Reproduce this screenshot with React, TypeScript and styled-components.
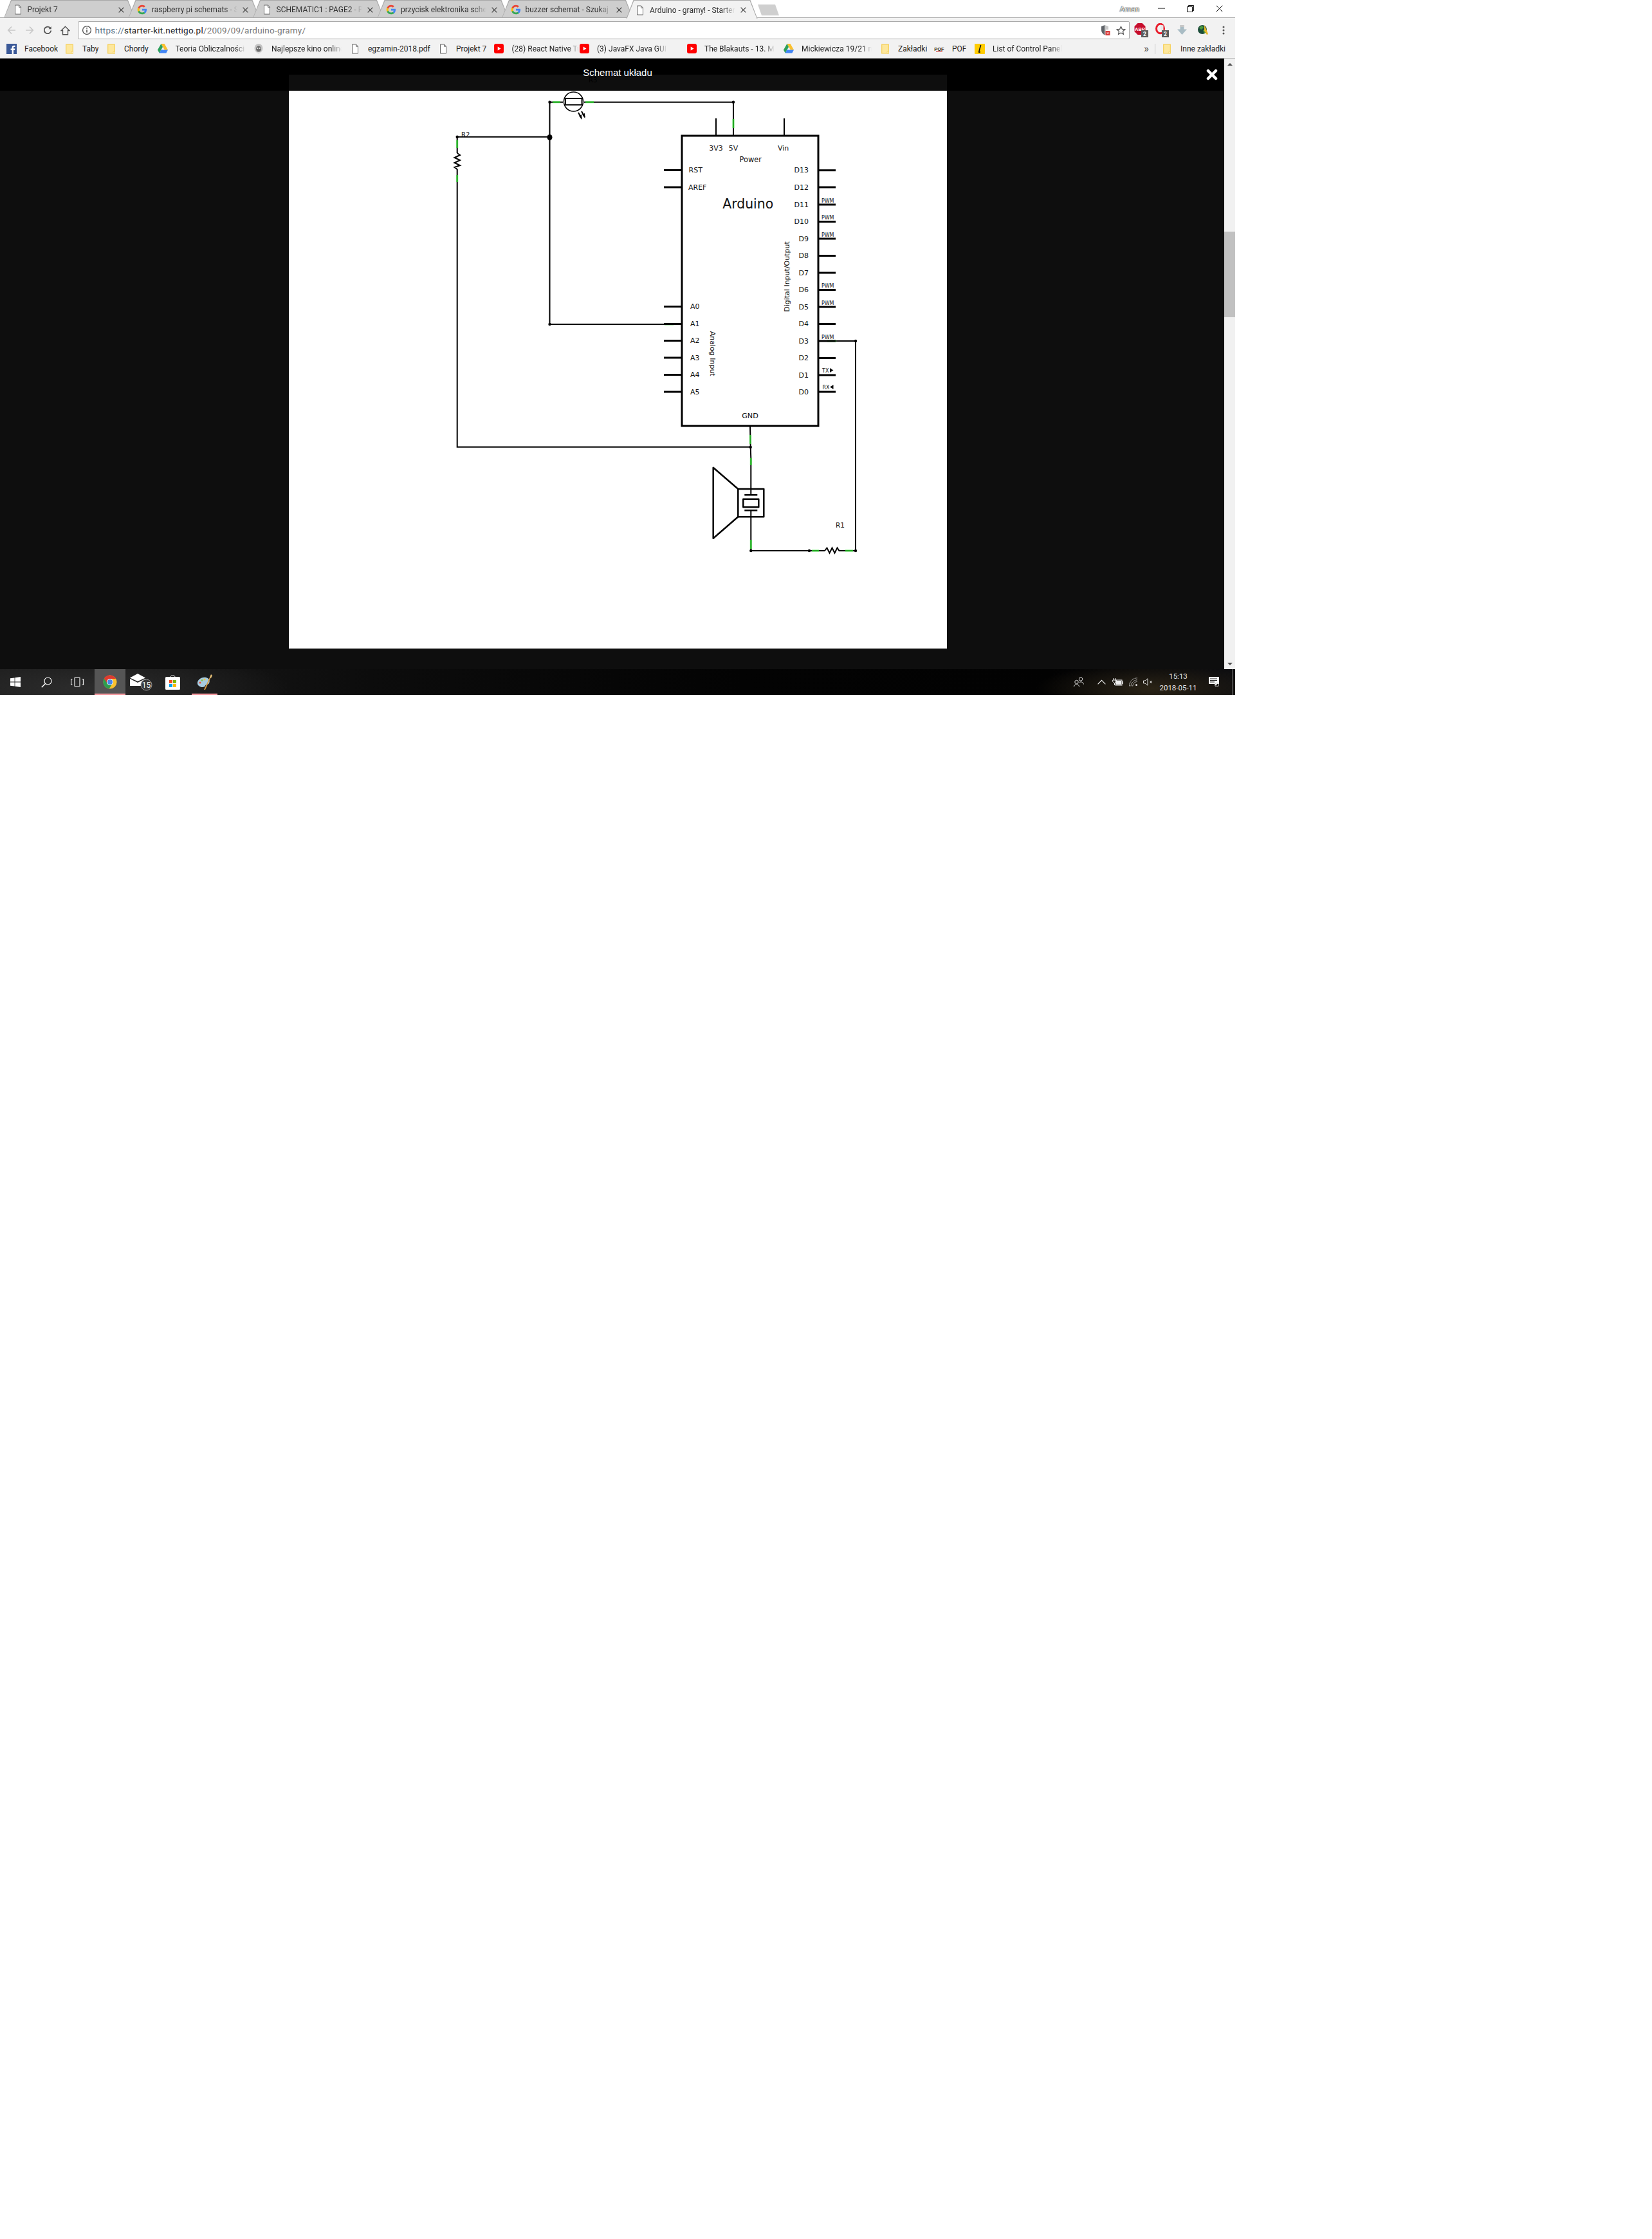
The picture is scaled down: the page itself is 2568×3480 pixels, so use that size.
import React from "react";
import styled, { createGlobalStyle } from "styled-components";

const Global = createGlobalStyle`
  html, body { margin: 0; padding: 0; background: #fff; }
  #root { width: 2568px; height: 3480px; background: #fff; }
`;

const Screen = styled.div`
  width: 1920px;
  height: 1080px;
  display: flex;
  flex-direction: column;
  overflow: hidden;
  font-family: Roboto, "Noto Sans", sans-serif;
  font-size: 12px;
  color: #222;
`;

/* ---------- window / tabs ---------- */
const TabStrip = styled.div`
  height: 28px;
  flex: none;
  display: flex;
  align-items: stretch;
  padding-left: 6px;
  background: #fff;
  box-shadow: inset 0 -1px 0 #a8a8a8;
  position: relative;
`;
const Tab = styled.div<{ $active?: boolean }>`
  position: relative;
  width: 204px;
  height: ${(p) => (p.$active ? 29 : 28)}px;
  margin-right: -10.5px;
  display: flex;
  align-items: center;
  padding: 2px 0 0 13.5px;
  box-sizing: border-box;
  flex: none;
  z-index: ${(p) => (p.$active ? 2 : 1)};
  &::before, &::after {
    content: "";
    position: absolute;
    z-index: -1;
    clip-path: polygon(0 100%, 11px 0, calc(100% - 11px) 0, 100% 100%);
  }
  &::before { inset: 0; background: #a8a8a8; }
  &::after { inset: 1px 1px ${(p) => (p.$active ? 0 : 1)}px 1px; background: ${(p) => (p.$active ? "#f2f2f2" : "#cecece")}; }
`;
const TabIcon = styled.span`
  width: 16px;
  height: 16px;
  flex: none;
  display: flex;
  align-items: center;
  justify-content: center;
`;
const TabTitle = styled.span`
  margin-left: 7px;
  width: 133px;
  flex: none;
  overflow: hidden;
  white-space: nowrap;
  font-size: 12px;
  color: #333;
  -webkit-mask-image: linear-gradient(90deg, #000 85%, transparent 100%);
  mask-image: linear-gradient(90deg, #000 85%, transparent 100%);
`;
const TabClose = styled.span`
  margin-left: 8px;
  display: flex;
`;
const NewTab = styled.div`
  width: 33px;
  height: 17px;
  align-self: flex-start;
  margin: 7px 0 0 11px;
  flex: none;
  background: #cfcfcf;
  clip-path: polygon(0 0, 27px 0, 100% 100%, 6px 100%);
`;
const Profile = styled.span`
  margin-left: auto;
  margin-right: 14px;
  align-self: flex-start;
  margin-top: 7px;
  color: #fff;
  font-size: 11.5px;
  line-height: 14px;
  text-shadow: 0 0 1px #333, 0 0 1px #333, 0 0 2px #555;
`;
const WindowButton = styled.span`
  width: 45px;
  height: 26px;
  display: flex;
  align-items: center;
  justify-content: center;
  flex: none;
  position: relative;
  left: -2px;
`;

/* ---------- toolbar ---------- */
const Toolbar = styled.div`
  height: 33px;
  flex: none;
  display: flex;
  align-items: center;
  background: #f2f2f2;
  padding-left: 4px;
  box-sizing: border-box;
  padding-top: 5px;
  padding-bottom: 0;
`;
const ToolButton = styled.span<{ $w?: number }>`
  width: ${(p) => p.$w ?? 28}px;
  height: 27px;
  display: flex;
  align-items: center;
  justify-content: center;
  flex: none;
`;
const Omnibox = styled.div`
  width: 1635px;
  height: 28px;
  margin-left: 5.5px;
  box-sizing: border-box;
  background: #fff;
  border: 1px solid #a9a9a9;
  border-radius: 2px;
  display: flex;
  align-items: center;
  padding-left: 5px;
  flex: none;
`;
const Url = styled.span`
  margin-left: 5px;
  font-size: 13.5px;
  color: #777;
  letter-spacing: 0.22px;
`;
const UrlScheme = styled.span`color: #5b7386;`;
const UrlHost = styled.span`color: #222;`;
const OmniIcons = styled.div`
  margin-left: auto;
  display: flex;
  align-items: center;
  gap: 8px;
  padding-right: 5px;
`;
const Extensions = styled.div`
  margin-left: 2.3px;
  display: flex;
`;

/* ---------- bookmarks ---------- */
const Bookmarks = styled.div`
  height: 30px;
  flex: none;
  box-sizing: border-box;
  background: #f2f2f2;
  border-bottom: 1px solid #b4b4b4;
  display: flex;
  align-items: center;
  padding-left: 10px;
`;
const Bookmark = styled.div<{ $w: number }>`
  width: ${(p) => p.$w}px;
  flex: none;
  display: flex;
  align-items: center;
  gap: 12px;
`;
const BookmarkIcon = styled.span`
  width: 16px;
  height: 16px;
  flex: none;
  display: flex;
  align-items: center;
  justify-content: center;
`;
const BookmarkLabel = styled.span<{ $fade?: boolean; $ml?: number }>`
  white-space: nowrap;
  overflow: hidden;
  font-size: 12px;
  color: #222;
  margin-left: ${(p) => p.$ml ?? 0}px;
  ${(p) =>
    p.$fade
      ? `max-width: 109px;
         -webkit-mask-image: linear-gradient(90deg, #000 85%, transparent 100%);
         mask-image: linear-gradient(90deg, #000 85%, transparent 100%);`
      : ""}
`;
const BookmarkEnd = styled.div`
  margin-left: auto;
  display: flex;
  align-items: center;
  height: 100%;
  padding-right: 15px;
`;
const Chevrons = styled.span`
  font-size: 17px;
  color: #555;
  margin-right: 9px;
  line-height: 1;
`;
const Separator = styled.span`
  width: 1px;
  height: 16px;
  background: #c4c4c4;
  margin-right: 10px;
`;

/* ---------- page ---------- */
const PageRow = styled.div`
  height: 949px;
  flex: none;
  display: flex;
`;
const Stage = styled.div`
  flex: 1;
  position: relative;
  display: flex;
  flex-direction: column;
  background: #0e0e0e;
`;
const LightboxHeader = styled.div`
  height: 50px;
  flex: none;
  background: #000;
  padding-left: 449px;
  display: flex;
  align-items: flex-end;
`;
const HeaderBand = styled.div`
  width: 1023px;
  height: 25px;
  background: #0e0e0e;
`;
const LightboxTitle = styled.div`
  position: absolute;
  top: 13px;
  left: 0;
  width: 1920px;
  text-align: center;
  font-family: "Liberation Sans", Arial, sans-serif;
  font-size: 15px;
  line-height: 18px;
  color: #fff;
`;
const CloseButton = styled.div`
  position: absolute;
  top: 16px;
  left: 1875px;
  width: 18px;
  height: 18px;
  display: flex;
`;
const Canvas = styled.div`
  flex: 1;
  padding-left: 449px;
`;
const Picture = styled.svg`
  display: block;
  width: 1023px;
  height: 867px;
  background: #fff;
  overflow: visible;
  font-family: "DejaVu Sans", sans-serif;
`;
const Scrollbar = styled.div`
  width: 17px;
  flex: none;
  background: #f1f1f1;
  display: flex;
  flex-direction: column;
  align-items: center;
  position: relative;
`;
const ScrollArrow = styled.span<{ $down?: boolean }>`
  width: 0;
  height: 0;
  border-left: 4px solid transparent;
  border-right: 4px solid transparent;
  ${(p) => (p.$down ? "border-top: 4px solid #505050; margin-bottom: 6px;" : "border-bottom: 4px solid #505050; margin-top: 7px;")}
`;
const ScrollThumb = styled.span`
  width: 17px;
  height: 133px;
  margin-top: 258px;
  margin-bottom: auto;
  background: #c1c1c1;
`;

const Wire = styled.path`
  fill: none;
  stroke: #000;
  stroke-width: 2px;
`;
const Heavy = styled.path`
  fill: none;
  stroke: #000;
  stroke-width: 3px;
  stroke-linejoin: miter;
`;
const Speaker = styled.path`
  fill: none;
  stroke: #000;
  stroke-width: 2.5px;
  stroke-linejoin: round;
`;
const Green = styled.path`
  fill: none;
  stroke: #2fdc2f;
  stroke-width: 3px;
  opacity: 0.75;
`;
const Label = styled.text<{ $size?: number }>`
  font-size: ${(p) => p.$size ?? 11}px;
  fill: #111;
`;
const HiddenLabel = styled.text`
  font-size: 10px;
  fill: #000;
`;

/* ---------- taskbar ---------- */
const Taskbar = styled.div`
  height: 40px;
  flex: none;
  display: flex;
  color: #fff;
  background:
    radial-gradient(ellipse 180px 40px at 1790px 30px, #2a2316 0%, transparent 100%),
    radial-gradient(ellipse 320px 60px at 130px 30px, #2c2c2c 0%, transparent 100%),
    linear-gradient(90deg, #1a1a1a 0%, #161616 14%, #0c0c0c 30%, #030303 60%, #020202 85%, #0d0d10 100%);
`;
const TaskSlot = styled.div<{ $w: number; $ml?: number; $active?: boolean; $running?: boolean }>`
  width: ${(p) => p.$w}px;
  margin-left: ${(p) => p.$ml ?? 0}px;
  flex: none;
  box-sizing: border-box;
  display: flex;
  align-items: center;
  justify-content: center;
  background: ${(p) => (p.$active ? "#555" : "transparent")};
  border-bottom: 2px solid ${(p) => (p.$running ? "#f79aa0" : "transparent")};
  border-top: 2px solid transparent;
`;
const Tray = styled.div`
  margin-left: auto;
  display: flex;
  width: 260px;
`;
const Clock = styled.div`
  width: 73px;
  flex: none;
  display: flex;
  flex-direction: column;
  align-items: center;
  font-size: 11.5px;
  line-height: 18px;
  padding-top: 2px;
  color: #e8e8e8;
`;
const ShowDesktop = styled.span`
  width: 1px;
  margin-left: 10px;
  background: #666;
`;

/* ---------- icons ---------- */
const Doc = () => (
  <svg width="12" height="16" viewBox="0 0 12 16" fill="#fff" stroke="#666" strokeWidth="1">
    <path d="M1.5 1h6l3 3.2V15h-9z" />
    <path d="M7.5 1v3.2h3" fill="none" />
  </svg>
);
const G = () => (
  <svg width="16" height="16" viewBox="0 0 24 24">
    <path fill="#4285F4" d="M22.56 12.25c0-.78-.07-1.53-.2-2.25H12v4.26h5.92c-.26 1.37-1.04 2.53-2.21 3.31v2.77h3.57c2.08-1.92 3.28-4.74 3.28-8.09z" />
    <path fill="#34A853" d="M12 23c2.97 0 5.46-.98 7.28-2.66l-3.57-2.77c-.98.66-2.23 1.06-3.71 1.06-2.86 0-5.29-1.93-6.16-4.53H2.18v2.84C3.99 20.53 7.7 23 12 23z" />
    <path fill="#FBBC05" d="M5.84 14.09c-.22-.66-.35-1.36-.35-2.09s.13-1.43.35-2.09V7.07H2.18C1.43 8.55 1 10.22 1 12s.43 3.45 1.18 4.93l2.85-2.22.81-.62z" />
    <path fill="#EA4335" d="M12 5.38c1.62 0 3.06.56 4.21 1.64l3.15-3.15C17.45 2.09 14.97 1 12 1 7.7 1 3.99 3.47 2.18 7.07l3.66 2.84c.87-2.6 3.3-4.53 6.16-4.53z" />
  </svg>
);
const CloseX = ({ c = "#444", s = 9, w = 1.4 }: { c?: string; s?: number; w?: number }) => (
  <svg width={s} height={s} viewBox="0 0 10 10" stroke={c} strokeWidth={w} fill="none">
    <path d="M.7.7l8.6 8.6M9.3.7L.7 9.3" />
  </svg>
);
const Folder = () => (
  <svg width="12" height="16" viewBox="0 0 12 16">
    <path d="M.7 1.2h10.6v13.6H.7z" fill="#fde79c" stroke="#f6cf57" strokeWidth="1.2" />
    <path d="M9 12h2.4v2.8H9z" fill="#fff6d2" stroke="#f6cf57" strokeWidth=".8" />
  </svg>
);
const Drive = () => (
  <svg width="16" height="15" viewBox="0 0 16 15">
    <path d="M5.4 0h5.2l5.4 9.6h-5.2z" fill="#fbc02d" />
    <path d="M5.4 0L0 9.6l2.6 4.8L8 5z" fill="#2ca05a" />
    <path d="M2.6 14.4h10.8L16 9.6H5.3z" fill="#4285f4" />
  </svg>
);
const Youtube = () => (
  <svg width="15" height="15" viewBox="0 0 15 15">
    <rect width="15" height="15" rx="3" fill="#f00" />
    <path d="M5.7 4.5l4.8 3-4.8 3z" fill="#fff" />
  </svg>
);
const Facebook = () => (
  <svg width="16" height="16" viewBox="0 0 16 16">
    <rect width="16" height="16" fill="#3b5998" />
    <path d="M11 16v-6h2l.3-2.4H11V6c0-.7.2-1.1 1.2-1.1h1.2V2.8c-.3 0-1-.1-1.8-.1-1.8 0-3 1.1-3 3.1v1.8H6.6V10h2V16z" fill="#fff" />
  </svg>
);
const Ghost = () => (
  <svg width="16" height="18" viewBox="0 0 16 18">
    <ellipse cx="8" cy="8" rx="6.5" ry="7" fill="#c4c4c4" />
    <ellipse cx="8" cy="9" rx="4" ry="4.5" fill="#6c6c6c" />
    <circle cx="6.3" cy="8" r="1.1" fill="#eee" />
    <circle cx="9.7" cy="8" r="1.1" fill="#eee" />
    <path d="M4 14l4 3 4-3" fill="#ddd" />
  </svg>
);
const Pof = () => (
  <svg width="16" height="12" viewBox="0 0 16 12">
    <text x="8" y="9" textAnchor="middle" fontSize="7.5" fontWeight="900" fontFamily="Liberation Sans, sans-serif" fill="#222">POF</text>
    <path d="M3 10.5h10" stroke="#c33" strokeWidth="1" />
  </svg>
);
const LIcon = () => (
  <svg width="16" height="16" viewBox="0 0 16 16">
    <rect width="16" height="16" rx="1" fill="#fc0" />
    <path d="M9.5 2.5C8.5 6 7.5 9.5 6.8 12.5c-.2.9.6 1 1.6.4" fill="none" stroke="#111" strokeWidth="1.6" strokeLinecap="round" />
  </svg>
);
const Back = ({ c }: { c: string }) => (
  <svg width="14" height="14" viewBox="0 0 14 14" fill="none" stroke={c} strokeWidth="1.7">
    <path d="M13 7H2M7 1.5L1.7 7 7 12.5" />
  </svg>
);
const Forward = ({ c }: { c: string }) => (
  <svg width="14" height="14" viewBox="0 0 14 14" fill="none" stroke={c} strokeWidth="1.7">
    <path d="M1 7h11M7 1.5L12.3 7 7 12.5" />
  </svg>
);
const Reload = () => (
  <svg width="14" height="14" viewBox="0 0 14 14" fill="none" stroke="#555" strokeWidth="1.8">
    <path d="M11.5 4A5.3 5.3 0 1 0 12.3 7.5" />
    <path d="M12.7 1v4.2H8.5z" fill="#555" stroke="none" />
  </svg>
);
const Home = () => (
  <svg width="15" height="15" viewBox="0 0 15 15" fill="none" stroke="#555" strokeWidth="1.4">
    <path d="M7.5 1.2L1.2 7.5h2.3v6.3h8V7.5h2.3z" />
  </svg>
);
const Info = () => (
  <svg width="16" height="16" viewBox="0 0 16 16" fill="none" stroke="#555" strokeWidth="1.3">
    <circle cx="8" cy="8" r="6.4" />
    <path d="M8 7v4.5" strokeWidth="1.6" />
    <circle cx="8" cy="4.8" r="1" fill="#555" stroke="none" />
  </svg>
);
const Shield = () => (
  <svg width="16" height="18" viewBox="0 0 16 18">
    <path d="M6.5 1L1 3v5.5C1 12.5 3.5 15 6.5 16.5z" fill="#5f6368" />
    <path d="M6.5 1L12 3v5H8v8L6.5 16.5z" fill="#c9c9c9" />
    <rect x="7.5" y="10" width="7" height="7" fill="#d93a3a" />
    <path d="M9.8 12.3l2.4 2.4M12.2 12.3l-2.4 2.4" stroke="#fff" strokeWidth="1" />
  </svg>
);
const Star = () => (
  <svg width="15" height="15" viewBox="0 0 15 15" fill="none" stroke="#555" strokeWidth="1.3">
    <path d="M7.5 1.3l1.9 4 4.3.5-3.2 3 .9 4.4-3.9-2.2-3.9 2.2.9-4.4-3.2-3 4.3-.5z" />
  </svg>
);
const Badge = ({ n }: { n: string }) => (
  <g>
    <rect x="11" y="11" width="11" height="11" fill="#5c5c5c" />
    <text x="16.5" y="20" textAnchor="middle" fontSize="8.5" fontWeight="700" fontFamily="Roboto, sans-serif" fill="#fff">{n}</text>
  </g>
);
const Abp = () => (
  <svg width="22" height="22" viewBox="0 0 22 22">
    <path d="M5.5 0h7l5 5v8l-5 5h-7l-5-5V5z" fill="#c70d2c" />
    <text x="9" y="12" textAnchor="middle" fontSize="7.5" fontWeight="700" fontFamily="Liberation Sans, sans-serif" fill="#fff">ABP</text>
    <Badge n="2" />
  </svg>
);
const Opera = () => (
  <svg width="22" height="22" viewBox="0 0 22 22">
    <ellipse cx="8.5" cy="8.5" rx="6" ry="7.3" fill="none" stroke="#e81c2b" strokeWidth="3" />
    <path d="M8.5 2.5l5 1v11.500l-3-1z" fill="#e8e8e8" />
    <Badge n="2" />
  </svg>
);
const Download = () => (
  <svg width="17" height="18" viewBox="0 0 17 18">
    <path d="M5.5 1h6v6.5H16L8.5 16 1 7.5h4.5z" fill="#a9bcc4" />
    <path d="M5.5 1h6v3h-6z" fill="#c6c6c6" />
  </svg>
);
const Globe = () => (
  <svg width="18" height="18" viewBox="0 0 18 18">
    <circle cx="8" cy="8" r="7" fill="#1c4d3a" />
    <path d="M3 5l4-3 3 2-2 3-2 1zM9 9l4-1 1 3-3 3z" fill="#4a9a3c" />
    <path d="M11 1l3 6 3 8-2 1-4-6z" fill="#e8b92a" />
  </svg>
);
const Dots = () => (
  <svg width="4" height="14" viewBox="0 0 4 14" fill="#555">
    <circle cx="2" cy="2" r="1.5" />
    <circle cx="2" cy="7" r="1.5" />
    <circle cx="2" cy="12" r="1.5" />
  </svg>
);
const WinLogo = () => (
  <svg width="16" height="16" viewBox="0 0 16 16" fill="#fff">
    <path d="M0 2.3l6.6-.9v6.2H0zM7.4 1.3L16 0v7.6H7.4zM0 8.4h6.6v6.2L0 13.7zM7.4 8.4H16V16l-8.6-1.3z" />
  </svg>
);
const Search = () => (
  <svg width="17" height="17" viewBox="0 0 17 17" fill="none" stroke="#fff" strokeWidth="1.2">
    <circle cx="10.5" cy="6.5" r="5.5" />
    <path d="M6.5 10.5L.8 16.3" strokeWidth="1.5" />
  </svg>
);
const TaskView = () => (
  <svg width="20" height="14" viewBox="0 0 20 14" fill="none" stroke="#fff" strokeWidth="1.1">
    <path d="M6 .5h8v13H6zM2.5 2.5H.6v9h1.900M17.500 2.500h1.900v9h-1.900" />
  </svg>
);
const ChromeLogo = () => (
  <svg width="22" height="22" viewBox="0 0 24 24">
    <circle cx="12" cy="12" r="11.5" fill="#fbc02d" />
    <path d="M2 6A11.5 11.5 0 0 0 10.5 23.4L16 15H9z" fill="#2e9e4f" />
    <path d="M12 .5A11.5 11.5 0 0 1 22 6.5H12L7 14 2 6A11.5 11.5 0 0 1 12 .5z" fill="#dd3b30" />
    <circle cx="12" cy="12" r="5.5" fill="#fff" />
    <circle cx="12" cy="12" r="4.4" fill="#4a86e8" />
  </svg>
);
const Mail = () => (
  <svg width="36" height="28" viewBox="0 0 36 28">
    <path d="M0 7.5L12 1l12 6.5L12 13z" fill="#fff" />
    <path d="M0 9l12 6 12-6v11H0z" fill="#fff" />
    <circle cx="25.5" cy="18.5" r="8.5" fill="#3a3a3a" stroke="#999" strokeWidth="1" />
    <text x="25.5" y="23" textAnchor="middle" fontSize="12" fontFamily="Roboto, sans-serif" fill="#fff">15</text>
  </svg>
);
const Store = () => (
  <svg width="23" height="24" viewBox="0 0 23 24">
    <path d="M7.5 6c0-6 8-6 8 0" fill="none" stroke="#ddd" strokeWidth="1" />
    <rect y="4" width="23" height="20" rx="1.5" fill="#fff" />
    <rect x="6" y="9" width="5" height="5" fill="#f25022" />
    <rect x="12" y="9" width="5" height="5" fill="#7fba00" />
    <rect x="6" y="15" width="5" height="5" fill="#00a4ef" />
    <rect x="12" y="15" width="5" height="5" fill="#ffb900" />
  </svg>
);
const Paint = () => (
  <svg width="24" height="24" viewBox="0 0 24 24">
    <path d="M1 15C0 9 7 4 14 5c5 1 7 5 5 9-2 3-5 1-6 4-1 3-10 3-12-3z" fill="#a6cbe0" />
    <circle cx="5" cy="13" r="1.5" fill="#e74c3c" />
    <circle cx="8" cy="9.5" r="1.5" fill="#8bc34a" />
    <circle cx="12" cy="8" r="1.5" fill="#f5c542" />
    <path d="M11 24L20 5l1.5.6L13 24z" fill="#d99a3d" />
    <path d="M20 5l2-5 2 2-2 4z" fill="#e8c27a" />
  </svg>
);
const People = () => (
  <svg width="16" height="16" viewBox="0 0 16 16" fill="none" stroke="#ddd" strokeWidth="1">
    <circle cx="11" cy="3.5" r="2.7" />
    <circle cx="4.5" cy="8" r="2.7" />
    <path d="M.5 15.5c0-5 8-5 8 0M9 8.5c3-1.5 6 0 6.5 3" />
  </svg>
);
const Chevron = () => (
  <svg width="13" height="8" viewBox="0 0 13 8" fill="none" stroke="#eee" strokeWidth="1.2">
    <path d="M.6 7.3l5.900-6 5.900 6" />
  </svg>
);
const Battery = () => (
  <svg width="17" height="12" viewBox="0 0 17 12">
    <path d="M2 0v3M5 0v3M.7 3h5.600v2.500L3.500 8 .7 5.500zM3.500 8v3" fill="none" stroke="#eee" strokeWidth="1" />
    <rect x="5" y="3" width="10" height="8" fill="none" stroke="#eee" strokeWidth="1" />
    <rect x="6" y="4" width="8" height="6" fill="#eee" />
    <rect x="15.5" y="5" width="1.5" height="4" fill="#eee" />
  </svg>
);
const Wifi = () => (
  <svg width="14" height="14" viewBox="0 0 14 14" fill="none" stroke="#bbb" strokeWidth="1">
    <path d="M.5 13.5C.5 6 6 .8 13 .8M3 13.5c0-5 4.5-9.800 10-9.800M5.700 13.500c0-3.500 3.500-7 7.300-7" strokeDasharray="2 .6" />
    <circle cx="11.5" cy="11.7" r="1.4" fill="#eee" stroke="none" />
  </svg>
);
const Volume = () => (
  <svg width="15" height="12" viewBox="0 0 15 12" fill="none" stroke="#ddd" strokeWidth="1">
    <path d="M.5 4H3L7 .8v10.400L3 8H.5zM10 4l4 4M14 4l-4 4" />
  </svg>
);
const Notify = () => (
  <svg width="18" height="16" viewBox="0 0 18 16">
    <path d="M1 0h16v11h-3l-2 3-2-3H1z" fill="#fff" />
    <path d="M3 3h11M3 5.5h11M3 8h7" stroke="#222" strokeWidth="1" />
    <circle cx="13.5" cy="12.5" r="3" fill="none" stroke="#bbb" strokeWidth="1" />
  </svg>
);

/* ---------- schematic ---------- */
const leftPins: [string, number, number][] = [
  ["RST", 264.5, 1070.5],
  ["AREF", 291, 1070],
  ["A0", 476.5, 1073],
  ["A1", 503.5, 1073],
  ["A2", 529.5, 1073],
  ["A3", 556, 1073],
  ["A4", 582.5, 1073],
  ["A5", 609, 1073],
];
const rightPins: [string, number, string?][] = [
  ["D13", 264.7],
  ["D12", 291],
  ["D11", 318, "PWM"],
  ["D10", 344.5, "PWM"],
  ["D9", 371, "PWM"],
  ["D8", 397.5],
  ["D7", 424],
  ["D6", 450.5, "PWM"],
  ["D5", 477, "PWM"],
  ["D4", 503.5],
  ["D3", 530, "PWM"],
  ["D2", 556.5],
  ["D1", 583],
  ["D0", 609],
];
const ends: [number, number][] = [
  [854.5, 158.7],
  [1140, 158.7],
  [710.7, 212.7],
  [854.5, 504],
  [1330, 530],
  [1166.7, 695],
  [1167.3, 856],
  [1258, 856],
  [1330, 856],
];

const Schematic = () => (
  <Picture viewBox="449 141 1023 867">
    <HiddenLabel x="915" y="128">R3</HiddenLabel>

    <Wire d="M854.5 158.7H875M908 158.7H1140V211M854.5 158.7V504H1060" />
    <Wire d="M710.7 212.7H854.5M710.7 212.7V238M710.700 263V694.700H1166.700" />
    <Wire d="M710.7 238l4.3 3-8.500 4 8.500 4-8.500 4 8.500 4-8.500 3 4.200 3" />
    <Wire d="M1113 184V211M1219 184V211" />
    <Wire d="M1166 662L1166.7 695L1167.3 712V769.3M1167.3 793.3V856H1282" />
    <Wire d="M1282 856l3.500-4.500 4 8 4-8 4 8 4-8 3 4.500H1330V530H1272" />
    <Green d="M859 158.7h12M910 158.7h13M1140 185v14M710.7 218v12M710.7 272v11M1033 504h14M1286 530h14M1166.5 676v14M1167.3 712v11M1167.3 839v14M1262 856h11M1314 856h12" />
    {ends.map(([x, y]) => (
      <circle key={`${x}-${y}`} cx={x} cy={y} r="2.2" fill="#000" />
    ))}
    <ellipse cx="854.5" cy="213.5" rx="4" ry="4.5" fill="#000" />

    <ellipse cx="891.5" cy="158" rx="15" ry="15" fill="#fff" stroke="#000" strokeWidth="1.5" />
    <rect x="879" y="153" width="25.5" height="10" fill="#fff" stroke="#000" strokeWidth="1.8" />
    <Wire d="M899 175l5 9M904 173l5 9" />
    <path d="M904.5 186l-.5-8-4 2zM909.5 184l-.5-8-4 2z" fill="#000" />

    <Heavy d="M1060 211H1272V662H1060z" />
    {leftPins.map(([t, y, x]) => (
      <g key={t}>
        <Heavy d={`M1032 ${y}H1060`} />
        <Label x={x} y={y + 3.5}>{t}</Label>
      </g>
    ))}
    {rightPins.map(([t, y, tag]) => (
      <g key={t}>
        <Heavy d={`M1272 ${y}H1299`} />
        <Label x="1257" y={y + 3.5} textAnchor="end">{t}</Label>
        {tag && <Label x="1286.7" y={y - 3.5} textAnchor="middle" $size={8}>{tag}</Label>}
      </g>
    ))}
    <Label x="1278" y="578.5" $size={8}>TX</Label>
    <path d="M1290 572l5.500 3.500-5.500 3.500z" fill="#111" />
    <Label x="1278.5" y="604.5" $size={8}>RX</Label>
    <path d="M1295.5 598l-5.500 3.500 5.500 3.500z" fill="#111" />

    <Label x="1113" y="233.8" textAnchor="middle">3V3</Label>
    <Label x="1140" y="233.8" textAnchor="middle">5V</Label>
    <Label x="1217.7" y="233.8" textAnchor="middle">Vin</Label>
    <Label x="1166.7" y="251.8" textAnchor="middle" $size={11.4}>Power</Label>
    <Label x="1162.7" y="323.5" textAnchor="middle" $size={20.4}>Arduino</Label>
    <Label x="1166" y="650" textAnchor="middle" $size={11.2}>GND</Label>
    <Label transform="translate(1226.5 430) rotate(-90)" textAnchor="middle">Digital Input/Output</Label>
    <Label transform="translate(1103.5 549.7) rotate(90)" textAnchor="middle">Analog Input</Label>

    <Speaker d="M1147.3 760L1108.7 726.7V836.7L1147.3 803.3" />
    <Speaker d="M1147.3 760H1187.3V803.3H1147.3z" />
    <Speaker d="M1157.3 769.3H1177.3M1157.3 793.3H1177.3" />
    <Speaker d="M1155.3 775.7H1179.3V788.3H1155.3z" />
    <Label x="1306" y="820" textAnchor="middle" $size={10.5}>R1</Label>
    <Label x="723.7" y="213" textAnchor="middle" $size={10}>R2</Label>
  </Picture>
);

/* ---------- data ---------- */
const tabs = [
  { icon: <Doc />, title: "Projekt 7" },
  { icon: <G />, title: "raspberry pi schemats - S" },
  { icon: <Doc />, title: "SCHEMATIC1 : PAGE2 - PCB" },
  { icon: <G />, title: "przycisk elektronika schem" },
  { icon: <G />, title: "buzzer schemat - Szukaj w" },
  { icon: <Doc />, title: "Arduino - gramy! - Starter", active: true },
];
const bookmarks = [
  { w: 90, icon: <Facebook />, label: "Facebook" },
  { w: 65, icon: <Folder />, label: "Taby" },
  { w: 79.5, icon: <Folder />, label: "Chordy" },
  { w: 149.5, icon: <Drive />, label: "Teoria Obliczalności - ", fade: true },
  { w: 150, icon: <Ghost />, label: "Najlepsze kino online", fade: true },
  { w: 137, icon: <Doc />, label: "egzamin-2018.pdf" },
  { w: 86.5, icon: <Doc />, label: "Projekt 7" },
  { w: 132.5, icon: <Youtube />, label: "(28) React Native Tutorial", fade: true },
  { w: 167, icon: <Youtube />, label: "(3) JavaFX Java GUI Tutorial", fade: true },
  { w: 151, icon: <Youtube />, label: "The Blakauts - 13. Mój", fade: true },
  { w: 150, icon: <Drive />, label: "Mickiewicza 19/21 mieszkanie", fade: true },
  { w: 84, icon: <Folder />, label: "Zakładki" },
  { w: 63, icon: <Pof />, label: "POF" },
  { w: 140, icon: <LIcon />, label: "List of Control Panel", fade: true },
];

export default function App() {
  return (
    <>
      <Global />
      <Screen>
        <TabStrip>
          {tabs.map((t) => (
            <Tab key={t.title} $active={t.active}>
              <TabIcon>{t.icon}</TabIcon>
              <TabTitle>{t.title}</TabTitle>
              <TabClose><CloseX /></TabClose>
            </Tab>
          ))}
          <NewTab />
          <Profile>Aman</Profile>
          <WindowButton>
            <svg width="11" height="2" viewBox="0 0 11 2"><path d="M0 1h11" stroke="#111" strokeWidth="1" /></svg>
          </WindowButton>
          <WindowButton>
            <svg width="11" height="11" viewBox="0 0 11 11" fill="none" stroke="#111"><path d="M.5 2.5h8v8h-8zM2.5 2.5v-2h8v8h-2" /></svg>
          </WindowButton>
          <WindowButton>
            <CloseX c="#111" s={11} w={0.9} />
          </WindowButton>
        </TabStrip>

        <Toolbar>
          <ToolButton><Back c="#c8c8c8" /></ToolButton>
          <ToolButton><Forward c="#c8c8c8" /></ToolButton>
          <ToolButton><Reload /></ToolButton>
          <ToolButton $w={27}><Home /></ToolButton>
          <Omnibox>
            <Info />
            <Url>
              <UrlScheme>https://</UrlScheme>
              <UrlHost>starter-kit.nettigo.pl</UrlHost>
              /2009/09/arduino-gramy/
            </Url>
            <OmniIcons>
              <Shield />
              <Star />
            </OmniIcons>
          </Omnibox>
          <Extensions>
            <ToolButton $w={32}><Abp /></ToolButton>
            <ToolButton $w={32}><Opera /></ToolButton>
            <ToolButton $w={32}><Download /></ToolButton>
            <ToolButton $w={32}><Globe /></ToolButton>
            <ToolButton $w={32}><Dots /></ToolButton>
          </Extensions>
        </Toolbar>

        <Bookmarks>
          {bookmarks.map((b) => (
            <Bookmark key={b.label} $w={b.w}>
              <BookmarkIcon>{b.icon}</BookmarkIcon>
              <BookmarkLabel $fade={b.fade}>{b.label}</BookmarkLabel>
            </Bookmark>
          ))}
          <BookmarkEnd>
            <Chevrons>»</Chevrons>
            <Separator />
            <BookmarkIcon><Folder /></BookmarkIcon>
            <BookmarkLabel $ml={13}>Inne zakładki</BookmarkLabel>
          </BookmarkEnd>
        </Bookmarks>

        <PageRow>
          <Stage>
            <LightboxHeader>
              <HeaderBand />
            </LightboxHeader>
            <Canvas>
              <Schematic />
            </Canvas>
            <LightboxTitle>Schemat układu</LightboxTitle>
            <CloseButton>
              <svg width="18" height="18" viewBox="0 0 18 18" stroke="#fff" strokeWidth="4.5" strokeLinecap="round">
                <path d="M3 3l12 12M15 3L3 15" />
              </svg>
            </CloseButton>
          </Stage>
          <Scrollbar>
            <ScrollArrow />
            <ScrollThumb />
            <ScrollArrow $down />
          </Scrollbar>
        </PageRow>

        <Taskbar>
          <TaskSlot $w={48}><WinLogo /></TaskSlot>
          <TaskSlot $w={48}><Search /></TaskSlot>
          <TaskSlot $w={48}><TaskView /></TaskSlot>
          <TaskSlot $w={48} $ml={3} $active $running><ChromeLogo /></TaskSlot>
          <TaskSlot $w={49}><Mail /></TaskSlot>
          <TaskSlot $w={48}><Store /></TaskSlot>
          <TaskSlot $w={40} $ml={6} $running><Paint /></TaskSlot>
          <Tray>
            <TaskSlot $w={34}><People /></TaskSlot>
            <TaskSlot $w={6} />
            <TaskSlot $w={25}><Chevron /></TaskSlot>
            <TaskSlot $w={24}><Battery /></TaskSlot>
            <TaskSlot $w={25}><Wifi /></TaskSlot>
            <TaskSlot $w={21}><Volume /></TaskSlot>
            <Clock>
              <span>15:13</span>
              <span>2018-05-11</span>
            </Clock>
            <TaskSlot $w={37}><Notify /></TaskSlot>
            <ShowDesktop />
          </Tray>
        </Taskbar>
      </Screen>
    </>
  );
}
